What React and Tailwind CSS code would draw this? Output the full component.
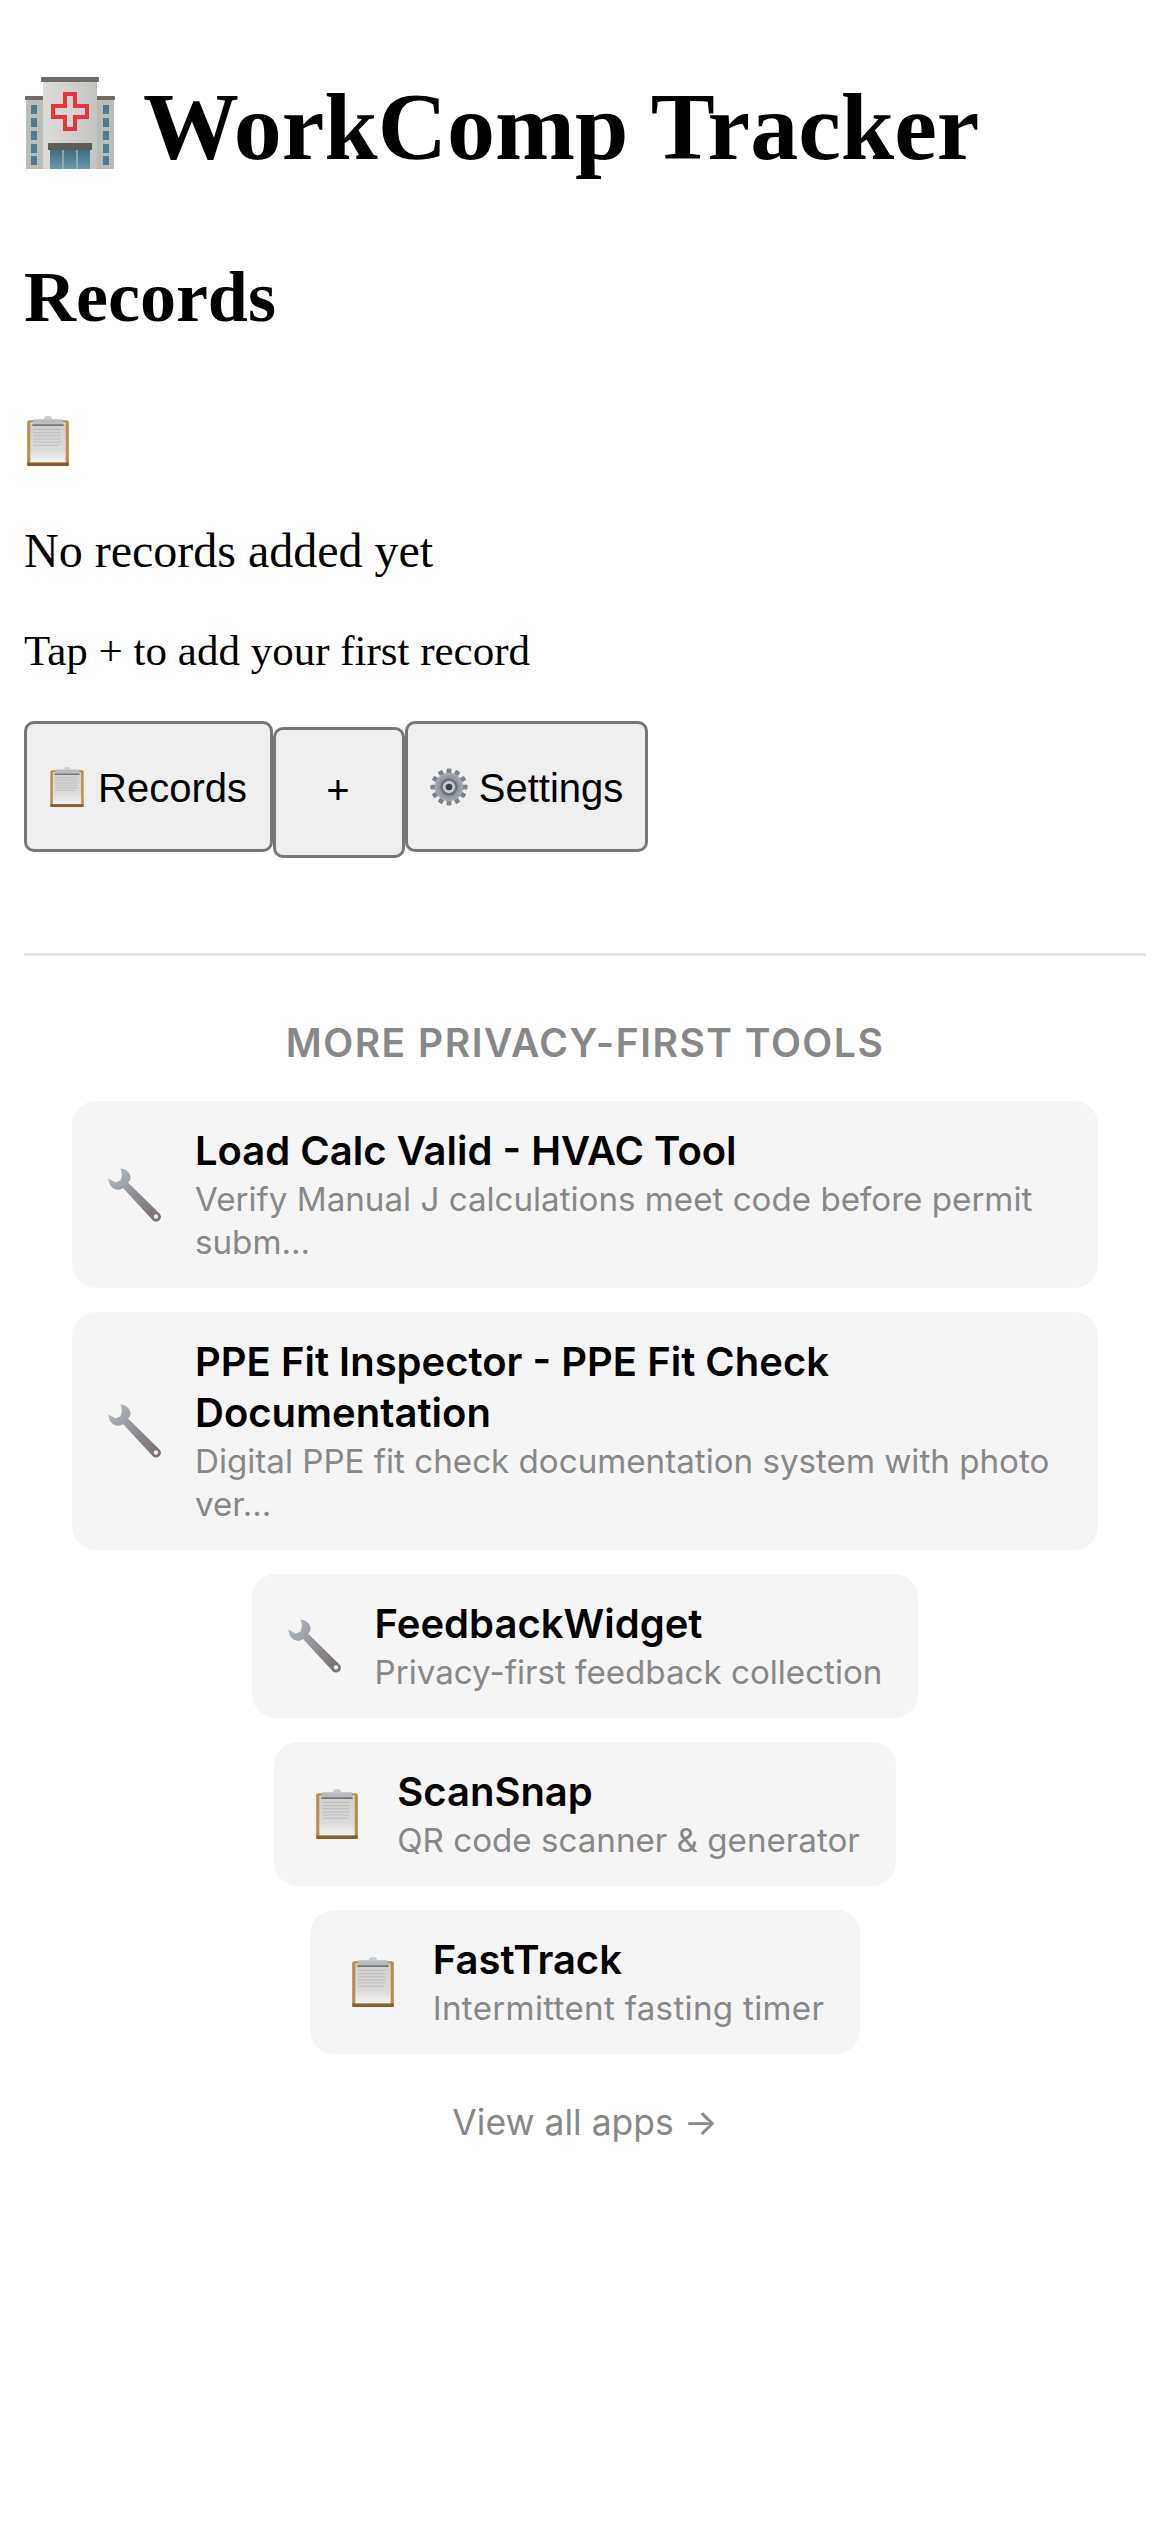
import React from 'react';

const Hospital = ({ className }) => (
    <svg viewBox="0 0 92 94" className={className}>
        <defs>
            <linearGradient id="hospWall" x1="0" y1="0" x2="1" y2="0">
                <stop offset="0" stopColor="#dcdcd8" />
                <stop offset="1" stopColor="#c4c4c0" />
            </linearGradient>
            <linearGradient id="hospDoor" x1="0" y1="0" x2="0" y2="1">
                <stop offset="0" stopColor="#3d6c84" />
                <stop offset="1" stopColor="#6b98ac" />
            </linearGradient>
        </defs>
        <rect x="1" y="19" width="90" height="4" rx="1" fill="#6f6c68" />
        <rect x="2" y="23" width="88" height="69" fill="#bdbdb8" />
        <rect x="19" y="2" width="54" height="90" fill="url(#hospWall)" />
        <rect x="17" y="0" width="58" height="5" rx="1" fill="#6f6c68" />
        {[28, 41, 54, 67, 79].map(y => (
            <g key={y}>
                <rect x="7" y={y} width="6" height="9" fill="#4d7c94" />
                <rect x="79" y={y} width="6" height="9" fill="#4d7c94" />
            </g>
        ))}
        <path d="M39 15h14v12h12v15H53v12H39V42H27V27h12z" fill="#e8333d" />
        <path d="M43 19h6v12h12v7H49v12h-6V38H31v-7h12z" fill="#d4d4d0" />
        <rect x="24" y="66" width="44" height="7" fill="#5f5c58" />
        <rect x="26" y="73" width="40" height="19" fill="url(#hospDoor)" />
        <path d="M39 73v19M53 73v19" stroke="#9cb4c0" strokeWidth="1.5" />
    </svg>
);

const Clipboard = ({ className }) => (
    <svg viewBox="0 0 40 48" className={className}>
        <defs>
            <linearGradient id="clipPaper" x1="0" y1="0" x2="0" y2="1">
                <stop offset="0" stopColor="#cfcfcf" />
                <stop offset="0.7" stopColor="#dcdcdc" />
                <stop offset="1" stopColor="#f4f4f4" />
            </linearGradient>
        </defs>
        <rect x="0" y="4" width="40" height="44" rx="2" fill="#b98d4d" />
        <rect x="0" y="44.500" width="40" height="3.500" rx="1" fill="#86602d" />
        <rect x="3" y="6" width="34" height="38.500" fill="url(#clipPaper)" />
        <path d="M6 13h26M6 16h26M6 19h26M6 22h26M6 25h26M6 28h24" stroke="#bcbcbc" strokeWidth="1" />
        <path d="M6 3h28l1 6H5z" fill="#b9bdc2" />
        <rect x="5" y="8" width="30" height="1.5" fill="#6f6f6f" />
        <path d="M16 3a4 3 0 0 1 8 0z" fill="#c4ccd8" />
    </svg>
);

const Wrench = ({ className }) => (
    <svg viewBox="0 0 54 54" className={className}>
        <defs>
            <linearGradient id="wrenchBody" x1="0" y1="0" x2="1" y2="1">
                <stop offset="0" stopColor="#b4bdc7" />
                <stop offset="0.5" stopColor="#8f9095" />
                <stop offset="1" stopColor="#7a6a6e" />
            </linearGradient>
        </defs>
        <path
            d="M12.500.5C17 .5 22 4 22.500 9c.2 2-.3 3.500-2.500 5.500L51 45c2.500 2.500 2.500 5 .5 7-2 2-4.500 2-6.500.5L15 20c-2.500 2-5.500 2.200-8.500 1C2.500 19 .5 15 .5 10.500l7 4 5-2 1.500-5.500z"
            fill="url(#wrenchBody)"
        />
        <circle cx="48" cy="48.500" r="2.200" fill="#f0f0f0" />
    </svg>
);

const Gear = ({ className }) => (
    <svg viewBox="0 0 40 40" className={className}>
        <defs>
            <radialGradient id="gearBody">
                <stop offset="0" stopColor="#d8dde4" />
                <stop offset="0.6" stopColor="#8b919a" />
                <stop offset="1" stopColor="#a7adb5" />
            </radialGradient>
        </defs>
        {[0, 30, 60, 90, 120, 150, 180, 210, 240, 270, 300, 330].map(a => (
            <rect key={a} x="17.500" y="0.500" width="5" height="7" rx="1" fill="#7d838c" transform={`rotate(${a} 20 20)`} />
        ))}
        <circle cx="20" cy="20" r="15" fill="url(#gearBody)" />
        <circle cx="20" cy="20" r="9" fill="#6c7078" />
        <circle cx="20" cy="20" r="6.500" fill="#c8ccd2" />
        <circle cx="20" cy="20" r="3.500" fill="#3d4045" />
    </svg>
);

const tools = [
    { icon: 'wrench', title: 'Load Calc Valid - HVAC Tool', desc: 'Verify Manual J calculations meet code before permit subm...' },
    { icon: 'wrench', title: 'PPE Fit Inspector - PPE Fit Check Documentation', desc: 'Digital PPE fit check documentation system with photo ver...' },
    { icon: 'wrench', title: 'FeedbackWidget', desc: 'Privacy-first feedback collection' },
    { icon: 'clipboard', title: 'ScanSnap', desc: 'QR code scanner & generator' },
    { icon: 'clipboard', title: 'FastTrack', desc: 'Intermittent fasting timer', wide: true },
];

const ToolCard = ({ tool }) => (
    <a className="flex items-center gap-[33px] max-w-[1026px] rounded-[24px] bg-[#f5f5f5] px-[36px] py-[24px]">
        {tool.icon === 'wrench'
            ? <Wrench className="w-[54px] h-[54px] shrink-0" />
            : <Clipboard className="w-[46px] h-[50px] shrink-0 mx-[4px]" />}
        <div className="min-w-0">
            <div className="text-[40px] leading-[51px] font-semibold text-black">{tool.title}</div>
            <div className={`mt-[2px] text-[33.150px] leading-[43px] text-[#888888] ${tool.wide ? 'tracking-[0.3px]' : ''}`}>{tool.desc}</div>
        </div>
    </a>
);

const App = () => {
    return (
        <div className="bg-white min-h-[2532px] p-[24px] font-['Liberation_Serif',serif] text-black">
            <h1 className="flex items-center gap-[27px] pt-[48px] text-[96px] leading-[110px] font-bold">
                <Hospital className="mb-[6px] w-[92px] h-[94px] shrink-0" />
                <span>WorkComp Tracker</span>
            </h1>
            <h2 className="mt-[74px] text-[72px] leading-[83px] font-bold">Records</h2>
            <div className="mt-[77px]">
                <Clipboard className="ml-[2px] w-[44px] h-[50px]" />
            </div>
            <p className="mt-[57px] text-[48px] leading-[55px]">No records added yet</p>
            <p className="mt-[47px] text-[43px] leading-[51px]">Tap + to add your first record</p>

            <div className="mt-[45px] flex items-start font-['Liberation_Sans',sans-serif] text-[40px]">
                <button className="flex h-[131px] w-[249px] items-center justify-center gap-[14px] rounded-[10px] border-[3px] border-[#767676] bg-[#efefef]">
                    <Clipboard className="w-[34px] h-[40px]" />
                    <span className="pt-[3px]">Records</span>
                </button>
                <button className="mt-[6px] h-[131px] w-[132px] rounded-[10px] border-[3px] border-[#767676] bg-[#efefef] pb-[6px] pr-[2px]">+</button>
                <button className="flex h-[131px] w-[243px] items-center justify-center gap-[11px] rounded-[10px] border-[3px] border-[#767676] bg-[#efefef]">
                    <Gear className="w-[38px] h-[38px]" />
                    <span className="pt-[3px]">Settings</span>
                </button>
            </div>

            <div className="mt-[95px] border-t-[3px] border-[#e5e5e5] pt-[65px] font-['Inter',sans-serif]">
                <div className="text-center text-[39px] leading-[44px] font-semibold tracking-[1.500px] text-[#888888]">MORE PRIVACY-FIRST TOOLS</div>
                <div className="mt-[36px] flex flex-col items-center gap-[24px]">
                    {tools.map(tool => (
                        <ToolCard key={tool.title} tool={tool} />
                    ))}
                </div>
                <div className="mt-[47px] text-center text-[35.500px] leading-[44px] text-[#888888]">View all apps →</div>
            </div>
        </div>
    );
};

export default App;
